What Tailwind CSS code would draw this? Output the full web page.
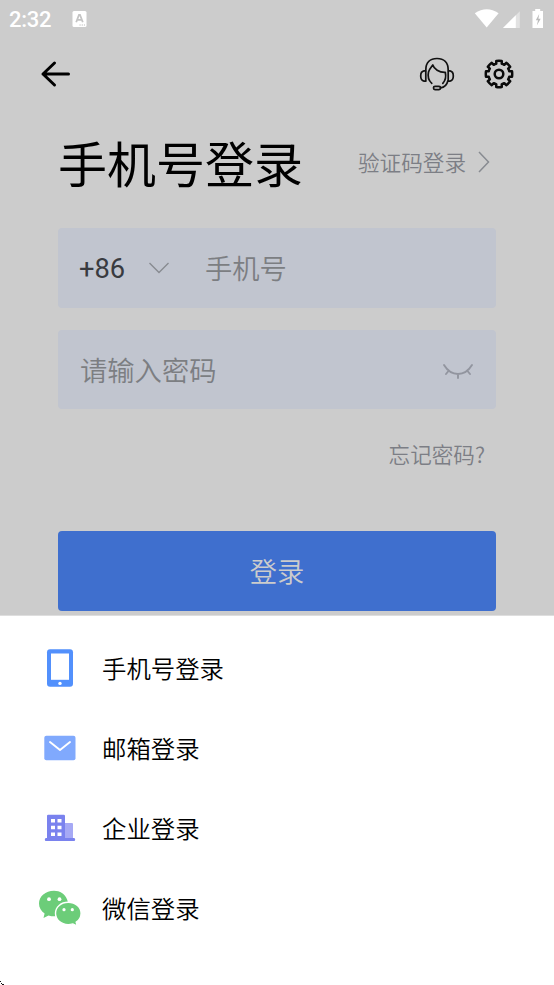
<!DOCTYPE html>
<html lang="zh-CN">
<head>
<meta charset="utf-8">
<title>手机号登录</title>
<script src="https://cdn.jsdelivr.net/npm/@tailwindcss/browser@4"></script>
</head>
<body class="w-[554px] h-[985px] overflow-hidden bg-[#cccccc] font-['Noto_Sans_CJK_SC',sans-serif] font-[350] text-black flex flex-col">
  <div class="h-[38px] shrink-0 flex items-center pl-[9px] pr-[10px] text-white">
    <span class="font-['Roboto',sans-serif] text-[22px] leading-[38px] pt-[2px] font-medium w-[63px] tracking-[-0.3px]">2:32</span>
    <svg width="16" height="18" viewBox="0 0 16 18"><rect x="0.5" y="1" width="14" height="16" rx="1.5" fill="#fff"/><path d="M4.2 12.200 7 4.800h1l2.800 7.400M5.300 9.800h4.500" fill="none" stroke="#c4c4c4" stroke-width="1.800"/><path d="M7.500 15h5.500" stroke="#bbb" stroke-width="1" stroke-dasharray="1.200 1"/></svg>
    <svg class="ml-auto" width="70" height="20" viewBox="0 0 70 20"><path d="M.800 4.200Q12.700-3.800 24.600 4.200L12.700 18.500Z" fill="#fff"/><path d="M45.800 2.200V19H29Z" fill="#e2e2e2"/><path d="M41.800 6.200V19H29Z" fill="#fff"/><path d="M61.200 0h5v2H69v17H58.500V2h2.700Z" fill="#fff"/><path d="M65.200 5 61.800 11.200h2.200L62.800 16.500 66.700 9.800h-2.300Z" fill="#bbb"/></svg>
  </div>
  <div class="h-[72px] shrink-0 flex items-center pl-[40px] pr-[39px]">
    <svg width="32" height="28" viewBox="0 0 32 28" fill="none" stroke="#000" stroke-width="3" stroke-linecap="round" stroke-linejoin="round"><path d="M14.500 3 3 14 14.500 25M3 14H28.500"/></svg>
    <svg class="ml-auto" width="36" height="36" viewBox="0 0 36 36" fill="none" stroke="#111" stroke-width="1.700" stroke-linecap="round" stroke-linejoin="round"><path d="M6.800 25V14C6.800 6.500 11.200 2.500 18 2.500S29.200 6.500 29.200 14V25"/><path d="M6.500 14.900H5Q1.700 15.500 1.700 20T5 25.100H6.500M29.500 14.900H31Q34.300 15.500 34.300 20T31 25.100H29.500"/><path d="M12.800 27.300C9 24 8.500 20.500 9.500 16 10.300 13 12 11.500 13.800 9 15 13 20 16.500 26.300 16.300 27.200 20.500 26.500 24.500 23.800 27.300"/><path d="M28.800 25Q27.500 31 21.500 31.800"/><rect x="14.500" y="30.300" width="7" height="3.300" rx="1.500"/></svg>
    <svg class="ml-[28px]" width="32" height="32" viewBox="0 0 32 32" fill="none" stroke="#0a0a0a" stroke-width="2.500" stroke-linejoin="round"><path d="M13.230 3Q16 2.600 18.770 3L18.740 5.760Q20 6 21.300 6.820L23.240 4.850Q25.500 6.500 27.150 8.760L25.180 10.700Q26 12 26.240 13.260L29 13.230Q29.400 16 29 18.770L26.240 18.740Q26 20 25.180 21.300L27.150 23.240Q25.500 25.500 23.240 27.150L21.300 25.180Q20 26 18.740 26.240L18.770 29Q16 29.400 13.230 29L13.260 26.240Q12 26 10.700 25.180L8.760 27.150Q6.500 25.500 4.850 23.240L6.820 21.300Q6 20 5.760 18.740L3 18.770Q2.600 16 3 13.230L5.760 13.260Q6 12 6.820 10.700L4.850 8.760Q6.500 6.500 8.760 4.850L10.700 6.820Q12 6 13.260 5.760Z"/><circle cx="16" cy="16" r="4.300"/></svg>
  </div>
  <div class="h-[118px] shrink-0 flex pl-[58px] pr-[63px] pt-[15px]">
    <h1 class="pt-[1px] text-[49px] leading-[72px] whitespace-nowrap font-normal">手机号登录</h1>
    <div class="ml-auto h-[74px] flex items-center text-[21.600px] text-[#7c7e85]">
      <span class="whitespace-nowrap">验证码登录</span>
      <svg class="ml-[11px]" width="14" height="24" viewBox="0 0 14 24" fill="none" stroke="#888b91" stroke-width="1.500"><path d="m2 2 9.500 10L2 22"/></svg>
    </div>
  </div>
  <div class="mx-[58px] h-[80px] shrink-0 rounded-[4px] bg-[#c1c5cf] flex items-center pl-[21px]">
    <span class="font-['Roboto',sans-serif] font-normal text-[27.300px] w-[69px] pt-[3px] text-[#393b40]">+86</span>
    <svg width="22" height="14" viewBox="0 0 22 14" fill="none" stroke="#888b91" stroke-width="1.400"><path d="m1.500 2 9.500 9.500L20.500 2"/></svg>
    <span class="ml-[35px] mb-[2px] text-[27.300px] leading-[40px] text-[#7c7e82]">手机号</span>
  </div>
  <div class="mx-[58px] mt-[22px] h-[79px] shrink-0 rounded-[4px] bg-[#c1c5cf] flex items-center pl-[22px] pr-[21px]">
    <span class="mb-[2px] text-[27.300px] leading-[40px] text-[#7c7e82]">请输入密码</span>
    <svg class="ml-auto mt-[3px]" width="34" height="18" viewBox="0 0 34 18" fill="none" stroke="#92959f" stroke-width="1.900" stroke-linecap="round"><path d="M3 3Q8.500 12 17 12T31 3M7.500 9 5 12M17 12v4M26.500 9l2.500 3"/></svg>
  </div>
  <div class="h-[122px] shrink-0 flex justify-end pr-[69px] pt-[29px] text-[21.600px] leading-[32px] text-[#7c7e85]">忘记密码?</div>
  <div class="mx-[58px] h-[80px] shrink-0 rounded-[4px] bg-[#3f6fce] flex items-center justify-center pb-[2px] text-[27.300px] text-[#cccccc]">登录</div>
  <div class="mt-[4px] flex-1 relative bg-white border-t border-[#dedede] pt-[12px] text-[24.400px] leading-[36px]">
    <div class="h-[80px] flex items-center pl-[38px]">
      <svg width="44" height="40" viewBox="0 0 44 40"><rect x="9" y="1.300" width="26" height="37.500" rx="3" fill="#5290fc"/><rect x="13" y="5.500" width="18" height="26.300" fill="#fff"/><circle cx="22" cy="35.400" r="1.700" fill="#fff"/></svg>
      <span class="ml-[20px]">手机号登录</span>
    </div>
    <div class="h-[80px] flex items-center pl-[38px]">
      <svg width="44" height="40" viewBox="0 0 44 40"><rect x="6.300" y="7.800" width="31.200" height="24.500" rx="2" fill="#80a9fd"/><path d="M12 14l10 8 10-8" fill="none" stroke="#fff" stroke-width="1.900" stroke-linecap="round" stroke-linejoin="round"/></svg>
      <span class="ml-[20px]">邮箱登录</span>
    </div>
    <div class="h-[80px] flex items-center pl-[38px]">
      <svg width="44" height="40" viewBox="0 0 44 40"><path d="M26 15h8q1 0 1 1v16h-9Z" fill="#a6a9f5"/><path d="M9 8q0-1.200 1.200-1.200h15.600q1.200 0 1.200 1.200v22H36q1.200 0 1.200 1.500T36 33H8q-1.200 0-1.200-1.500T8 30h1Z" fill="#7a82ee"/><path d="M13 11h4v3.500h-4zM19.500 11h4v3.500h-4zM13 17.700h4v3.500h-4zM19.500 17.700h4v3.500h-4zM13 24.500h4V28h-4zM19.500 24.500h4V28h-4z" fill="#fff"/></svg>
      <span class="ml-[20px]">企业登录</span>
    </div>
    <div class="h-[80px] flex items-center pl-[38px]">
      <svg width="44" height="40" viewBox="0 0 44 40"><path d="M16 2.800C7.500 2.800 1 8.500 1 15.500c0 4 2 7.500 5.600 10L5.500 30l5-2.600c7 2.300 14.500.3 18-5.400 2-3.200 2.200-7 .6-10.500C27 6.200 22 2.800 16 2.800Z" fill="#6ccd79"/><path d="M30.200 14.300C23 14.300 17.500 19 17.500 25.300S23 36.600 30.200 36.600c1.600 0 3.200-.3 4.700-.7l4.500 2.300-1.200-4c3.100-2 4.900-5 4.900-8.900 0-6.300-5.600-11-12.900-11Z" fill="#6ccd79" stroke="#fff" stroke-width="1.400"/><circle cx="11" cy="11.200" r="1.900" fill="#fff"/><circle cx="21.500" cy="11.200" r="1.900" fill="#fff"/><circle cx="26" cy="21.700" r="1.600" fill="#fff"/><circle cx="34.300" cy="21.700" r="1.600" fill="#fff"/></svg>
      <span class="ml-[20px]">微信登录</span>
    </div>
    <svg class="absolute left-0 bottom-0" width="4" height="4" viewBox="0 0 4 4" fill="#111"><path d="M0 0h1v1H0zM1 2h1v1H1zM2 3h2v1H2z"/></svg>
  </div>
</body>
</html>
